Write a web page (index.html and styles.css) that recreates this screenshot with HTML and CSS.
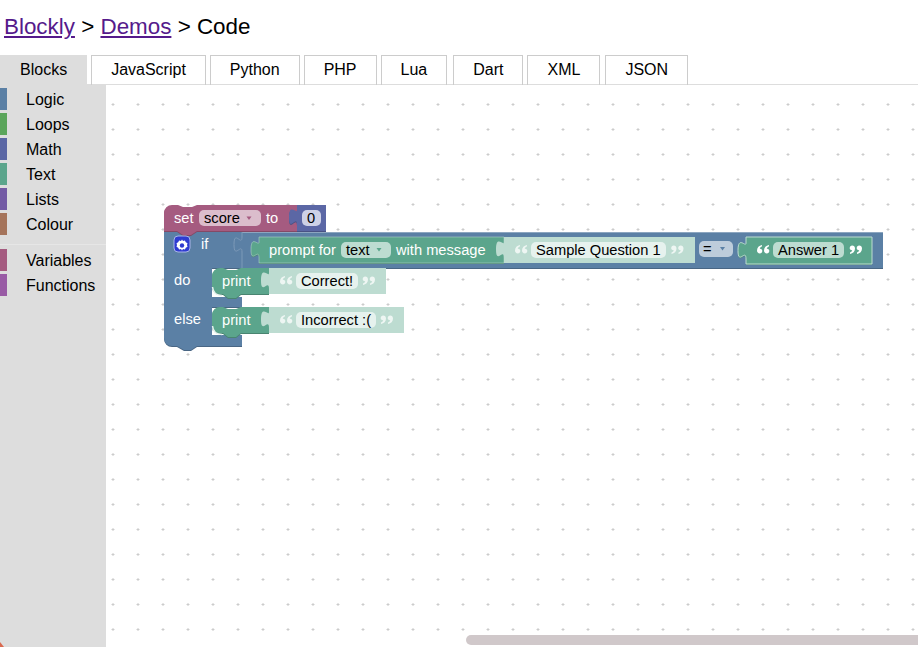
FILE: index.html
```html
<!DOCTYPE html>
<html>
<head>
  <title>Blockly Demo: Code</title>
  <link rel="stylesheet" href="styles.css">
</head>
<body>
  <h1 class="title"><a href="#">Blockly</a> &gt; <a href="#">Demos</a> &gt; Code</h1>
  <div class="tabs">
    <div class="tab tab-on">Blocks</div>
    <div class="tab">JavaScript</div>
    <div class="tab">Python</div>
    <div class="tab">PHP</div>
    <div class="tab">Lua</div>
    <div class="tab tab-dart">Dart</div>
    <div class="tab">XML</div>
    <div class="tab tab-json">JSON</div>
  </div>
  <div class="main">
    <div class="toolbox">
      <div class="cat cat-logic">Logic</div>
      <div class="cat cat-loops">Loops</div>
      <div class="cat cat-math">Math</div>
      <div class="cat cat-text">Text</div>
      <div class="cat cat-lists">Lists</div>
      <div class="cat cat-colour">Colour</div>
      <div class="sep"></div>
      <div class="cat cat-vars">Variables</div>
      <div class="cat cat-funcs">Functions</div>
      <div class="corner"></div>
    </div>
    <svg class="workspace" width="812" height="562">
      <defs>
        <pattern id="grid" width="25" height="25" patternUnits="userSpaceOnUse">
          <path d="M11.5 4.5h3M13 3v3" stroke="#ccc" stroke-width="1"/>
        </pattern>
        <path id="quote" d="M0 5.5C0 2.5 2 .6 5 0v1.6C3.6 2 2.9 2.8 2.8 3.8 4.3 3.6 5.3 4.600 5.300 6 5.300 7.400 4.200 8.400 2.800 8.400 1.100 8.400 0 7.200 0 5.500ZM7 5.500C7 2.500 9 .6 12 0v1.600C10.600 2 9.900 2.800 9.800 3.800 11.300 3.600 12.300 4.600 12.300 6 12.300 7.400 11.200 8.400 9.800 8.400 8.100 8.400 7 7.200 7 5.500Z"/>
        <path id="if-shape" d="M164 232H883V268H212V297H242V307H212V335H242V346H197L191 350H184L177 346H172A8 8 0 0 1 164 338Z"/>
        <path id="set-shape" d="M172 205H178L183 207H192L197 205H298V231H197L191 235H183L177 231H164V213A8 8 0 0 1 172 205Z"/>
        <path id="num-shape" d="M297 205H326V231H297V225C297 214 289 233 289 217.500S297 215 297 210Z"/>
        <path id="prompt-shape" d="M259 237H504V263H259V258C259 247 251 265 251 249.500S259 247 259 242Z"/>
        <path id="answer-shape" d="M746 237H872V264H746V259C746 248 738 266 738 250.500S746 248 746 243Z"/>
        <path id="print-shape" d="M220 268H223L228 270H236L241 268H269V294H241L236 298H228L223 294H220A8 8 0 0 1 212 286V276A8 8 0 0 1 220 268Z"/>
      </defs>
      <g transform="translate(-106 -85)">
        <rect x="106" y="85" width="812" height="562" fill="url(#grid)"/>

        <!-- if / else -->
        <use href="#if-shape" class="dark-logic" x="0" y="1"/>
        <use href="#if-shape" class="fill-logic"/>
        <path d="M242 232.500H883" class="light-logic"/>
        <path d="M242 232V237C242 247 234 229 234 244.500S242 242 242 252V268" class="socket"/>

        <!-- set score to -->
        <use href="#set-shape" class="dark-vars" y="1"/>
        <use href="#set-shape" class="fill-vars"/>
        <text x="174" y="223" class="label">set</text>
        <rect x="199" y="210" width="62" height="16" rx="5" fill="#dbbdcc"/>
        <text x="204" y="223" class="field">score</text>
        <path d="M246.500 216.500h5l-2.500 3.500Z" fill="#a55b80"/>
        <text x="266" y="223" class="label">to</text>
        <use href="#num-shape" class="dark-math" y="1"/>
        <use href="#num-shape" class="fill-math"/>
        <rect x="302" y="210" width="19" height="16" rx="5" fill="#cdd1e6"/>
        <text x="307" y="223" class="field">0</text>

        <!-- if row -->
        <rect x="174" y="236" width="16" height="16" rx="4" fill="#2f3bd0" stroke="#a9b4e8"/>
        <path d="M182 239.500l1 1.600 1.900-.5.900 1.700 1.700.9-.5 1.800.5 1.800-1.700.9-.9 1.700-1.900-.5-1 1.600-1-1.600-1.900.5-.9-1.700-1.700-.9.5-1.800-.5-1.800 1.700-.9.9-1.700 1.900.5Z" fill="#fff"/>
        <circle cx="182" cy="245.500" r="2.200" fill="#2f3bd0"/>
        <text x="201" y="249" class="label">if</text>
        <text x="174" y="285" class="label">do</text>
        <text x="174" y="324" class="label">else</text>

        <!-- prompt -->
        <use href="#prompt-shape" class="dark-text" y="1"/>
        <use href="#prompt-shape" class="fill-text edge-soft"/>
        <text x="269" y="255" class="label">prompt for</text>
        <rect x="341" y="242" width="50" height="16" rx="5" fill="#bddcd1"/>
        <text x="346" y="255" class="field">text</text>
        <path d="M376.500 248h5l-2.500 3.500Z" fill="#5ba58c"/>
        <text x="396" y="255" class="label">with message</text>
        <rect x="504" y="237" width="191" height="26" class="shadow"/>
        <path d="M504 242C504 247 496 234 496 249.500S504 247 504 258Z" class="shadow"/>
        <use href="#quote" x="515" y="245" class="mark-shadow"/>
        <rect x="531" y="242" width="135" height="16" rx="5" class="string"/>
        <text x="536" y="255" class="field">Sample Question 1</text>
        <use href="#quote" class="mark-shadow" transform="translate(683.500 254) rotate(180)"/>

        <!-- = -->
        <rect x="699" y="241" width="34" height="16" rx="5" fill="#bdccdb"/>
        <text x="703" y="254" class="field">=</text>
        <path d="M720 247h5l-2.500 3.500Z" fill="#5b80a5"/>

        <!-- answer -->
        <use href="#answer-shape" class="dark-text" y="1"/>
        <use href="#answer-shape" class="fill-text edge"/>
        <use href="#quote" x="757" y="245" class="mark-text"/>
        <rect x="773" y="242" width="71" height="16" rx="5" fill="#bddcd1"/>
        <text x="778" y="255" class="field">Answer 1</text>
        <use href="#quote" class="mark-text" transform="translate(862 254) rotate(180)"/>

        <!-- print correct -->
        <use href="#print-shape" class="dark-text" y="1"/>
        <use href="#print-shape" class="fill-text"/>
        <path d="M212.500 287C213 292 216 295.500 222 295.500" class="print-edge"/>
        <text x="222" y="286" class="label">print</text>
        <rect x="269" y="268" width="117" height="26" class="shadow"/>
        <path d="M269 273C269 278 261 265 261 280.500S269 278 269 289Z" class="shadow"/>
        <use href="#quote" x="280" y="276" class="mark-shadow"/>
        <rect x="296" y="273" width="62" height="16" rx="5" class="string"/>
        <text x="301" y="286" class="field">Correct!</text>
        <use href="#quote" class="mark-shadow" transform="translate(375 285) rotate(180)"/>

        <!-- print incorrect -->
        <g transform="translate(0 39)">
          <use href="#print-shape" class="dark-text" y="1"/>
          <use href="#print-shape" class="fill-text"/>
          <path d="M212.500 287C213 292 216 295.500 222 295.500" class="print-edge"/>
          <text x="222" y="286" class="label">print</text>
          <rect x="269" y="268" width="135" height="26" class="shadow"/>
          <path d="M269 273C269 278 261 265 261 280.500S269 278 269 289Z" class="shadow"/>
          <use href="#quote" x="280" y="276" class="mark-shadow"/>
          <rect x="296" y="273" width="80" height="16" rx="5" class="string"/>
          <text x="301" y="286" class="field">Incorrect :(</text>
          <use href="#quote" class="mark-shadow" transform="translate(393 285) rotate(180)"/>
        </g>

        <!-- scrollbar -->
        <rect x="466" y="635" width="460" height="10" rx="5" fill="#d0c8ca"/>
      </g>
    </svg>
  </div>
</body>
</html>
```

FILE: styles.css
```css
html, body { height: 100%; }

body {
  font-family: "Liberation Sans", Arial, sans-serif;
  margin: 0;
  background-color: #fff;
  color: #000;
  display: flex;
  flex-direction: column;
  overflow: hidden;
}

.title {
  font-size: 22.4px;
  font-weight: normal;
  line-height: 26px;
  margin: 0;
  padding: 14px 4px 15px;
}

.title a { color: #551a8b; }

.tabs {
  display: flex;
  gap: 4px;
  height: 29px;
  border-bottom: 1px solid #ddd;
}

.tab {
  border: 1px solid #ccc;
  border-bottom: none;
  padding: 0 19px;
  font-size: 16px;
  line-height: 28px;
  height: 29px;
}

.tab-on {
  background-color: #ddd;
  border-color: #ddd;
  height: 30px;
}

.tab-dart { margin-left: 2px; }
.tab-json { margin-left: 1px; }

.main {
  display: flex;
  flex: 1;
  min-height: 0;
}

.toolbox {
  position: relative;
  width: 106px;
  flex: none;
  background-color: #ddd;
  padding-top: 3px;
  box-sizing: border-box;
}

.cat {
  height: 22px;
  line-height: 24px;
  margin-bottom: 3px;
  padding-left: 19px;
  font-size: 16px;
  border-left: 7px solid #ccc;
}

.cat-logic { border-left-color: #5b80a5; }
.cat-loops { border-left-color: #5ba55b; }
.cat-math { border-left-color: #5b67a5; }
.cat-text { border-left-color: #5ba58c; }
.cat-lists { border-left-color: #745ba5; }
.cat-colour { border-left-color: #a5745b; }
.cat-vars { border-left-color: #a55b80; }
.cat-funcs { border-left-color: #995ba5; }

.sep {
  height: 1px;
  background-color: #e6e6e6;
  margin: 9px 0 4px;
}

.corner {
  position: absolute;
  left: 0;
  bottom: 0;
  border-left: 4px solid #d9694f;
  border-top: 5px solid transparent;
}

.workspace {
  display: block;
  flex: 1;
  background-color: #fff;
}

.label {
  font-size: 14.67px;
  fill: #fff;
}

.field {
  font-size: 14.67px;
  fill: #000;
}

.fill-logic { fill: #5b80a5; }
.dark-logic { fill: #496684; }
.fill-vars { fill: #a55b80; }
.dark-vars { fill: #844966; }
.fill-math { fill: #5b67a5; }
.dark-math { fill: #495284; }
.fill-text { fill: #5ba58c; }
.dark-text { fill: #498470; }

.light-logic {
  fill: none;
  stroke: #8ca6c0;
  stroke-width: 1px;
}

.edge {
  stroke: #bddcd1;
  stroke-width: 1px;
}

.edge-soft {
  stroke: #bddcd1;
  stroke-width: 1px;
  stroke-opacity: 0.5;
}

.socket {
  fill: none;
  stroke: #7d9ab8;
  stroke-width: 1px;
}

.print-edge {
  fill: none;
  stroke: #e6f2ee;
  stroke-width: 1.5px;
}

.shadow { fill: #bddcd1; }
.string { fill: #e6f2ee; }
.mark-shadow { fill: #eef6f3; }
.mark-text { fill: #fff; }
```
